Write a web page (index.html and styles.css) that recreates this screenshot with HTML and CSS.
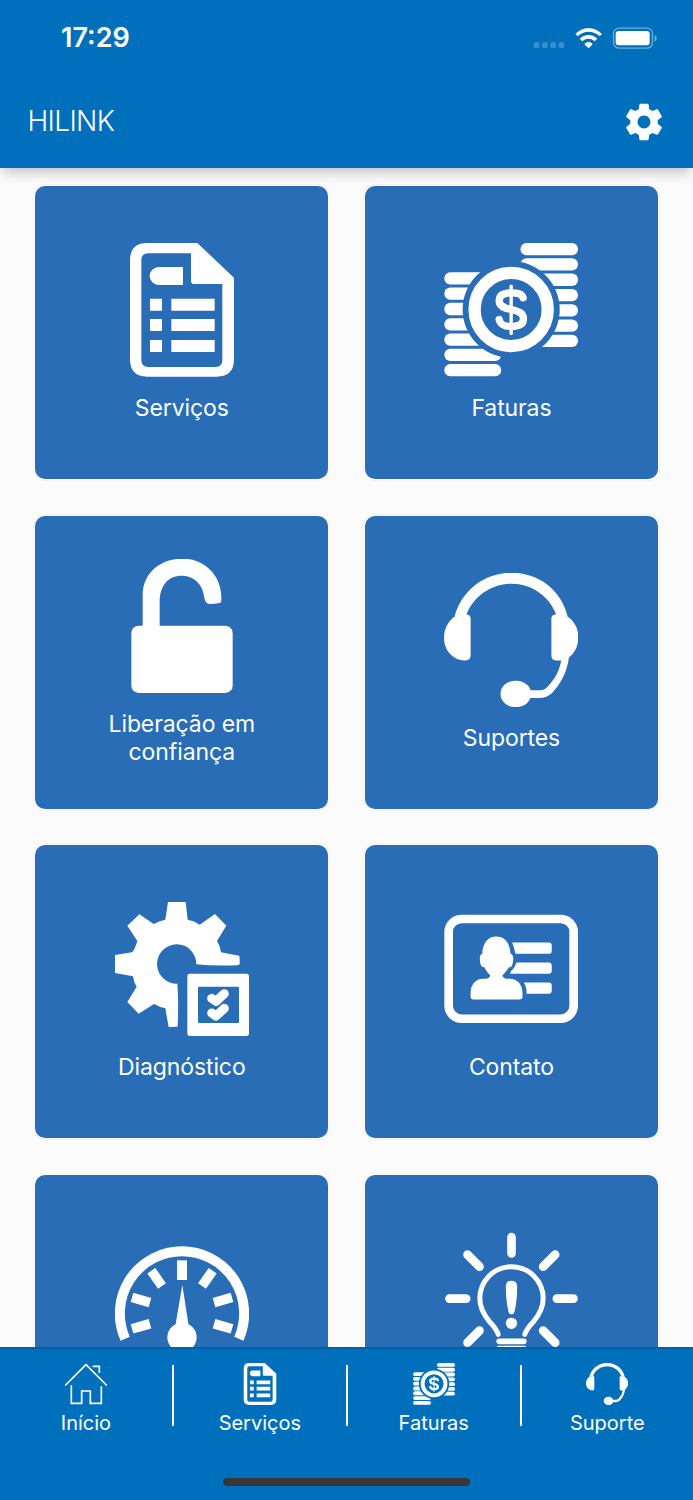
FILE: index.html
```html
<!DOCTYPE html>
<html lang="pt-BR">
<head>
<meta charset="utf-8">
<title>HILINK</title>
<link rel="stylesheet" href="styles.css">
</head>
<body>
<svg class="sprite" width="0" height="0" aria-hidden="true">
  <symbol id="i-doc" viewBox="45 69 402 402">
    <path fill-rule="evenodd" d="M142 69H292L402 173V418Q402 470 350 470H142Q90 470 90 418V121Q90 69 142 69ZM145 100Q124 100 124 121V421Q124 441 145 441H347Q367 441 367 421V192H283Q273 192 273 182V100Z"/>
    <path d="M176 141H249V195H176A27 27 0 0 1 176 141ZM150 236h36v36h-36zM150 297h36v36h-36zM150 360h36v36h-36zM214 236h130v36h-130zM214 297h130v36h-130zM214 360h130v36h-130z"/>
  </symbol>
  <symbol id="i-coins" viewBox="43 69 403 403">
    <mask id="coin-gap" maskUnits="userSpaceOnUse" x="43" y="69" width="403" height="403">
      <rect x="43" y="69" width="403" height="403" fill="#fff"/>
      <circle cx="245" cy="269" r="146" fill="#000"/>
    </mask>
    <g mask="url(#coin-gap)">
      <rect x="273" y="69" width="173" height="37" rx="18"/>
      <rect x="273" y="115" width="173" height="37" rx="18"/>
      <rect x="273" y="161" width="173" height="37" rx="18"/>
      <rect x="273" y="207" width="173" height="37" rx="18"/>
      <rect x="273" y="253" width="173" height="37" rx="18"/>
      <rect x="273" y="299" width="173" height="37" rx="18"/>
      <rect x="273" y="345" width="173" height="37" rx="18"/>
      <rect x="44" y="157" width="171" height="37" rx="18"/>
      <rect x="44" y="203" width="171" height="37" rx="18"/>
      <rect x="44" y="249" width="171" height="37" rx="18"/>
      <rect x="44" y="295" width="171" height="37" rx="18"/>
      <rect x="44" y="341" width="171" height="37" rx="18"/>
      <rect x="44" y="387" width="171" height="37" rx="18"/>
      <rect x="44" y="433" width="171" height="37" rx="18"/>
    </g>
    <circle class="line" cx="245" cy="269" r="110" stroke-width="37"/>
    <path class="line" stroke-width="22" d="M281 234C277 221 264 219 245 219C222 219 209 227 209 243C209 260 225 265 245 269C268 274 282 280 282 297C282 313 268 320 245 320C222 320 212 314 209 299"/>
    <path class="line" stroke-width="10" d="M245 199V341"/>
  </symbol>
  <symbol id="i-unlock" viewBox="45 56 402 402">
    <rect x="94" y="256" width="304" height="202" rx="22"/>
    <path d="M128 260V165C128 95 185 55 247 55C320 55 372 115 363 186Q361 190 330 191Q317 191 313 173C309 130 280 106 245 106C205 106 179 135 179 185V260Z"/>
  </symbol>
  <symbol id="i-headset" viewBox="43 37 403 403">
    <path d="M75 168C95 90 165 36 246 36C328 36 397 90 415 168L381 163C360 105 305 69 246 69C187 69 132 105 110 163Z"/>
    <path d="M75 168L110 161Q123 162 123 174V285Q123 300 105 300C68 300 43 268 43 232C43 205 55 183 75 168Z"/>
    <path d="M415 168C437 185 447 205 447 232C447 255 437 276 419 291L396 300H382Q366 300 366 285V174Q366 162 381 161Z"/>
    <path d="M396 298L419 290C413 340 390 375 368 398Q352 413 330 413H300V390H328Q345 390 355 378C380 352 390 330 396 298Z"/>
    <rect x="213" y="361" width="92" height="79" rx="44" ry="39"/>
  </symbol>
  <symbol id="i-diag" viewBox="45 36 402 402">
    <path d="M204 36H257L263 89Q283 92 299 104L345 72L379 107L351 153Q361 170 363 187L417 197Q419 198 419 211V223Q418 225 410 226Q340 228 289 223A59 59 0 1 0 232 281Q236 330 233 410L206 411L196 355Q180 352 162 342L116 371L82 336L110 290Q101 278 99 259L45 249V195L96 187Q103 182 112 153L82 107L118 73L161 102Q180 91 196 89Z"/>
    <path fill-rule="evenodd" d="M270 251H439Q447 251 447 259V430Q447 438 439 438H270Q262 438 262 430V259Q262 251 270 251ZM298 290Q294 290 294 294V395Q294 399 298 399H413Q417 399 417 395V294Q417 290 413 290Z"/>
    <path class="line" stroke-width="27" d="M335 325L348 334L373 311M335 369L348 378L373 355"/>
  </symbol>
  <symbol id="i-contact" viewBox="43 37 403 403">
    <rect class="line" x="57" y="88" width="376" height="300" rx="39" stroke-width="26"/>
    <path d="M200 141C224 141 241 158 243 193C252 195 253 208 249 224C247 231 243 235 238 233C233 243 226 250 219 257C220 265 226 268 240 268C265 268 279 287 279 310V322Q279 330 270 330H132Q123 330 123 321V310C123 287 138 268 160 268C174 268 181 265 182 258C175 250 168 242 165 233C159 234 155 230 153 224C149 208 150 195 158 193C160 158 176 141 200 141Z"/>
    <path d="M248 159H358q9 0 9 9V184q0 9-9 9H258Q254 175 248 159ZM261 219H358q9 0 9 9V244q0 9-9 9H242Q243 243 249 241Q257 232 261 219ZM283 279H358q9 0 9 9V304q0 9-9 9H291V300Q289 288 283 279Z"/>
  </symbol>
  <symbol id="i-gauge" viewBox="285 201 402 402">
    <path class="line butt" stroke-width="30" d="M315.5 521A186.5 186.5 0 1 1 656.5 521"/>
    <rect x="471" y="286" width="30" height="59"/>
    <rect x="-14.500" y="-28" width="29" height="56" transform="translate(410 340) rotate(-35)"/>
    <rect x="-14.500" y="-28" width="29" height="56" transform="translate(562 340) rotate(35)"/>
    <rect x="-14.500" y="-28" width="29" height="56" transform="translate(363 405) rotate(-74)"/>
    <rect x="-14.500" y="-28" width="29" height="56" transform="translate(609 405) rotate(74)"/>
    <rect x="-14.500" y="-28" width="29" height="56" transform="translate(363 484) rotate(-106)"/>
    <rect x="-14.500" y="-28" width="29" height="56" transform="translate(609 484) rotate(106)"/>
    <path d="M487 360L506 482H466Z"/>
    <circle cx="486" cy="517" r="44"/>
  </symbol>
  <symbol id="i-bulb" viewBox="267.500 201 402 402">
    <path class="line" stroke-width="26" d="M470 216V265M284 401H334M606 401H656M338 269L374 305M601 269L565 305M374 497L338 533M565 497L601 533"/>
    <path class="line" stroke-width="15" d="M430 508Q425 492 405 471Q375 437 375 400A95 95 0 0 1 565 400Q565 437 535 471Q515 492 510 508"/>
    <path class="line" stroke-width="17" d="M433 529H507M433 551H507"/>
    <path d="M470 347Q487 347 487 364Q487 410 479 440Q477 448 470 448Q463 448 461 440Q453 410 453 364Q453 347 470 347Z"/>
    <circle cx="470" cy="475" r="17"/>
  </symbol>
  <symbol id="i-home" viewBox="196 69 126 126">
    <path class="line" stroke-width="5" d="M198 135L259 74L320 135"/>
    <path class="line butt" stroke-width="5" d="M215 136V190H246V153H272V190H305V139M279 79H299V99"/>
  </symbol>
</svg>

<header class="topbar">
  <div class="status">
    <span class="clock">17:29</span>
    <svg class="status-icons" viewBox="100 80 374 66" width="124.670" height="22">
      <g opacity=".22">
        <rect x="102" y="126" width="17" height="17" rx="5"/><rect x="127" y="126" width="17" height="17" rx="5"/><rect x="152" y="126" width="17" height="17" rx="5"/><rect x="177" y="126" width="17" height="17" rx="5"/>
      </g>
      <path d="M227 101C250 77 284 77 307 101L300 108C281 90 253 90 234 108ZM240 115C256 100 278 100 293 115L285 123C274 113 259 113 248 123ZM255 130C262 123 272 123 278 130Q279 132 277 134L267 144L256 134Q254 132 255 130Z"/>
      <rect class="line" x="341.500" y="83.500" width="117" height="60" rx="17" stroke-width="4" opacity=".42"/>
      <rect x="348" y="92" width="102" height="43" rx="9"/>
      <path d="M465 104Q471 107 471 114Q471 121 465 124Z" opacity=".45"/>
    </svg>
  </div>
  <div class="appbar">
    <h1 class="title">HILINK</h1>
    <svg class="settings" viewBox="0 0 24 24" width="44" height="44"><path d="M19.43 12.98c.04-.32.07-.64.07-.98s-.03-.66-.07-.98l2.110-1.650c.19-.15.24-.42.12-.64l-2-3.460c-.12-.22-.39-.3-.61-.22l-2.490 1c-.52-.4-1.080-.73-1.690-.98l-.38-2.650C14.460 2.180 14.250 2 14 2h-4c-.25 0-.46.18-.49.42l-.38 2.650c-.61.25-1.170.59-1.690.98l-2.490-1c-.23-.09-.49 0-.61.22l-2 3.460c-.13.22-.07.49.12.64l2.110 1.650c-.04.32-.07.65-.07.98s.03.66.07.98l-2.110 1.650c-.19.15-.24.42-.12.64l2 3.460c.12.22.39.3.61.22l2.490-1c.52.4 1.080.73 1.690.98l.38 2.650c.03.24.24.42.49.42h4c.25 0 .46-.18.49-.42l.38-2.650c.61-.25 1.170-.59 1.690-.98l2.490 1c.23.09.49 0 .61-.22l2-3.460c.12-.22.07-.49-.12-.64l-2.110-1.650zM12 15.500c-1.930 0-3.500-1.570-3.500-3.500s1.570-3.500 3.500-3.500 3.500 1.570 3.500 3.500-1.570 3.500-3.500 3.500z"/></svg>
  </div>
</header>

<main class="grid">
  <a class="card"><svg class="card-icon"><use href="#i-doc"/></svg><span class="card-label">Serviços</span></a>
  <a class="card"><svg class="card-icon"><use href="#i-coins"/></svg><span class="card-label">Faturas</span></a>
  <a class="card"><svg class="card-icon"><use href="#i-unlock"/></svg><span class="card-label">Liberação em confiança</span></a>
  <a class="card"><svg class="card-icon"><use href="#i-headset"/></svg><span class="card-label">Suportes</span></a>
  <a class="card"><svg class="card-icon"><use href="#i-diag"/></svg><span class="card-label">Diagnóstico</span></a>
  <a class="card"><svg class="card-icon"><use href="#i-contact"/></svg><span class="card-label">Contato</span></a>
  <a class="card"><svg class="card-icon"><use href="#i-gauge"/></svg><span class="card-label"></span></a>
  <a class="card"><svg class="card-icon"><use href="#i-bulb"/></svg><span class="card-label"></span></a>
</main>

<footer class="bottom">
  <nav class="tabs">
    <a class="tab"><svg class="tab-icon"><use href="#i-home"/></svg><span class="tab-label">Início</span></a>
    <a class="tab"><svg class="tab-icon"><use href="#i-doc"/></svg><span class="tab-label">Serviços</span></a>
    <a class="tab"><svg class="tab-icon"><use href="#i-coins"/></svg><span class="tab-label">Faturas</span></a>
    <a class="tab"><svg class="tab-icon"><use href="#i-headset"/></svg><span class="tab-label">Suporte</span></a>
  </nav>
  <div class="home-bar"></div>
</footer>
</body>
</html>
```

FILE: styles.css
```css
* { box-sizing: border-box; }

body {
  margin: 0;
  width: 693px;
  height: 1500px;
  overflow: hidden;
  display: flex;
  flex-direction: column;
  background: #fbfbfb;
  color: #fff;
  font-family: Inter, "Liberation Sans", sans-serif;
}

svg { display: block; fill: #fff; }
.sprite { position: absolute; }
.line { fill: none; stroke: #fff; stroke-linecap: round; stroke-linejoin: round; }
.butt { stroke-linecap: butt; stroke-linejoin: miter; }

.topbar {
  flex: none;
  height: 167.5px;
  background: #0070bc;
  box-shadow: 0 7px 12px -3px rgba(0, 0, 0, .24);
  z-index: 1;
}
.status {
  height: 76px;
  padding: 0 35px 0 61px;
  display: flex;
  align-items: center;
  justify-content: space-between;
}
.clock { font-size: 27px; font-weight: 600; line-height: 32px; }
.appbar {
  height: 91px;
  padding: 0 27.5px;
  display: flex;
  align-items: center;
  justify-content: space-between;
}
.title {
  margin: 0;
  padding-bottom: 2px;
  font-size: 28px;
  font-weight: 350;
  line-height: 34px;
  letter-spacing: -.65px;
}

.grid {
  flex: 1;
  min-height: 0;
  overflow: hidden;
  padding: 18.500px 35.300px 0;
  display: grid;
  grid-template-columns: 293px 293px;
  grid-auto-rows: 293px;
  gap: 36.670px;
}
.card {
  display: flex;
  flex-direction: column;
  align-items: center;
  justify-content: center;
  gap: 17px;
  border-radius: 10px;
  background: #286db5;
  box-shadow: 0 0 0 1px #fff, 0 0 0 2px rgba(0, 0, 0, .03);
}
.card-icon { width: 134px; height: 134px; }
.card-label {
  width: 170px;
  min-height: 28px;
  font-size: 23px;
  font-weight: 375;
  line-height: 28px;
  letter-spacing: -.1px;
  text-align: center;
}

.bottom {
  flex: none;
  height: 153.500px;
  background: #0070bc;
  border-top: 2px solid #0062a6;
  z-index: 1;
}
.tabs {
  display: grid;
  grid-template-columns: repeat(3, 173.900px) 1fr;
  padding-top: 16.500px;
}
.tab {
  height: 61px;
  display: flex;
  flex-direction: column;
  align-items: center;
  border-right: 2px solid #fff;
}
.tab:last-child { border-right: 0; }
.tab-icon { width: 42px; height: 42px; margin-top: -2px; flex: none; }
.tab-label { margin-top: 6px; font-size: 20px; font-weight: 375; line-height: 24px; letter-spacing: 0; }
.home-bar {
  width: 247px;
  height: 8px;
  margin: 52px auto 0;
  border-radius: 4px;
  background: #363636;
}
```
